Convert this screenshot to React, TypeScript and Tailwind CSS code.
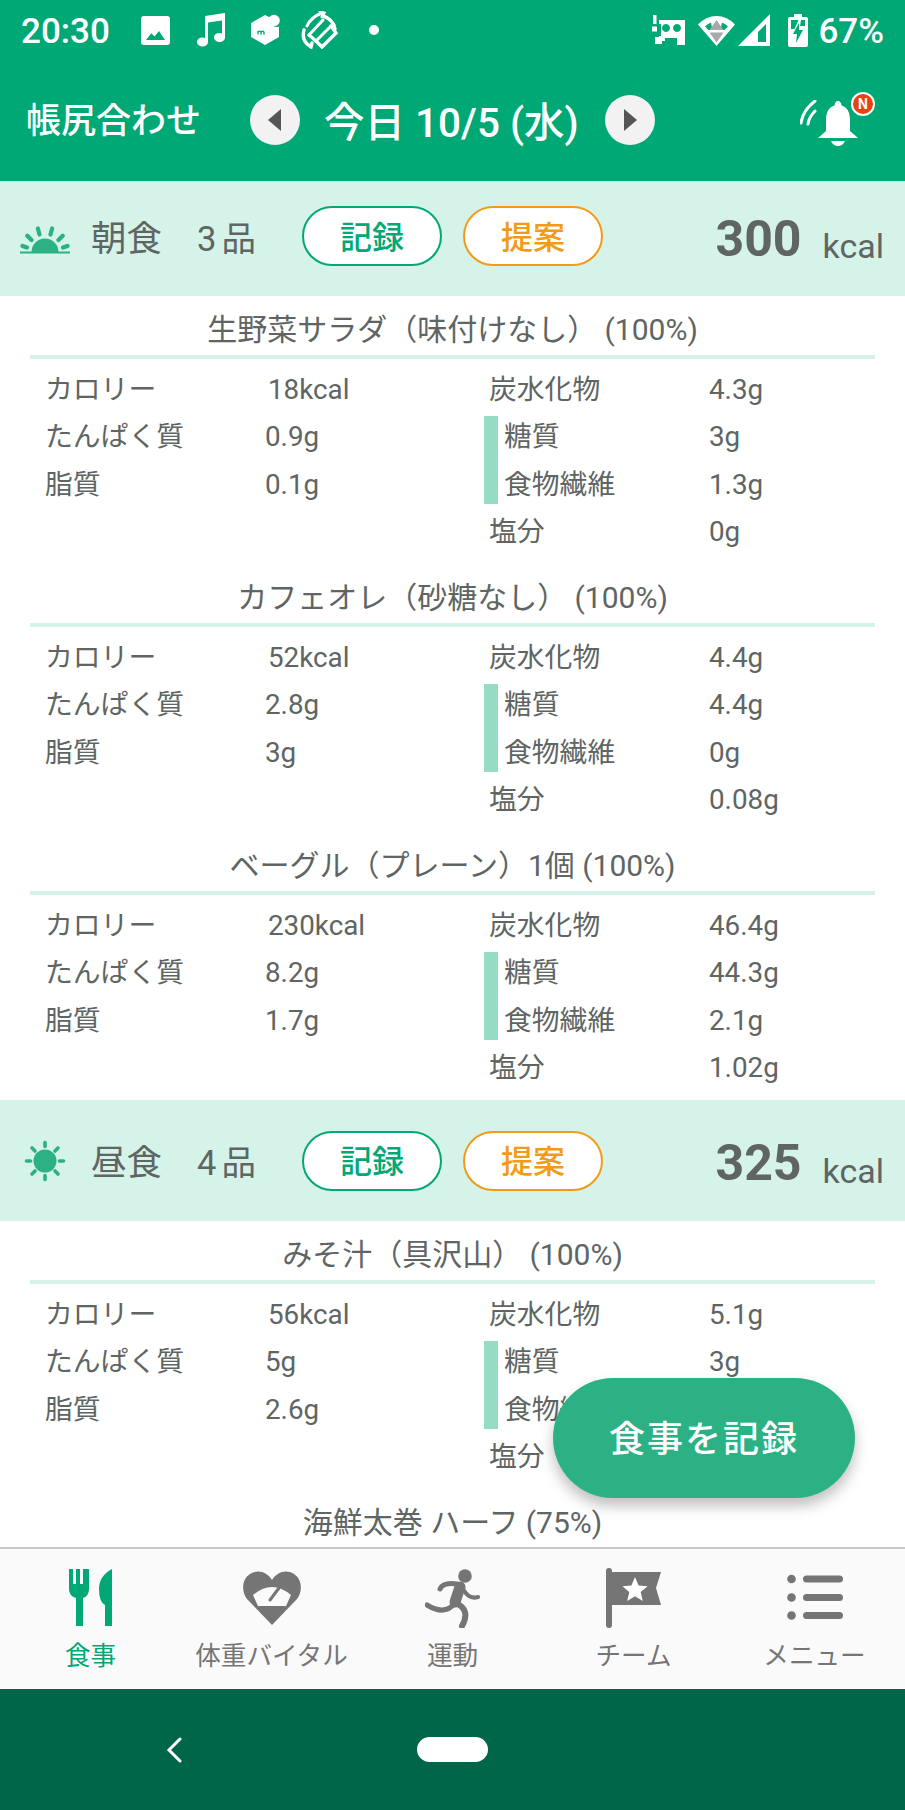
import React from "react";

type Food = { title: string; v?: string[] };

const breakfast: Food[] = [
  { title: "生野菜サラダ（味付けなし） (100%)", v: ["18kcal", "0.9g", "0.1g", "4.3g", "3g", "1.3g", "0g"] },
  { title: "カフェオレ（砂糖なし） (100%)", v: ["52kcal", "2.8g", "3g", "4.4g", "4.4g", "0g", "0.08g"] },
  { title: "ベーグル（プレーン）1個 (100%)", v: ["230kcal", "8.2g", "1.7g", "46.4g", "44.3g", "2.1g", "1.02g"] },
];
const lunch: Food[] = [
  { title: "みそ汁（具沢山） (100%)", v: ["56kcal", "5g", "2.6g", "5.1g", "3g", "", ""] },
  { title: "海鮮太巻 ハーフ (75%)" },
];

function Row({ label, value, kcal, sub }: { label: string; value: string; kcal?: boolean; sub?: boolean }) {
  return (
    <div className={sub ? "flex h-[39px] items-center" : "flex h-[47.6px] items-center"}>
      <span className={sub ? "w-[211px] pl-[6px]" : "w-[220px]"}>{label}</span>
      {value ? <span className={kcal ? "ml-[3px]" : ""}>{value}</span> : null}
    </div>
  );
}

function Item({ food }: { food: Food }) {
  const v = food.v;
  return (
    <div className="h-[268px] shrink-0">
      <div className="mx-[30px] flex h-[63px] items-center justify-center border-b-4 border-[#D5F3E8] pt-[9px] text-[30px] leading-[40px] text-[#5E6563]">
        {food.title}
      </div>
      {v ? (
        <div className="grid grid-cols-[444px_1fr] pl-[45px] pt-[7px] text-[27.800px] leading-[36px] text-[#5E6563]">
          <div>
            <Row label="カロリー" value={v[0]} kcal />
            <Row label="たんぱく質" value={v[1]} />
            <Row label="脂質" value={v[2]} />
          </div>
          <div>
            <Row label="炭水化物" value={v[3]} />
            <div className="ml-[-5px] mb-[4.5px] mt-[2.5px] flex h-[88px] flex-col justify-between border-l-[14px] border-[#94DCC4] pt-[1px]">
              <Row label="糖質" value={v[4]} sub />
              <Row label="食物繊維" value={v[5]} sub />
            </div>
            <Row label="塩分" value={v[6]} />
          </div>
        </div>
      ) : null}
    </div>
  );
}

function SunriseIcon() {
  return (
    <svg width="50" height="40" viewBox="0 0 50 40" fill="none">
      <path d="M11.5 36a13.5 13.5 0 0 1 27 0z" fill="#2BB184" />
      <path d="M0 36.5h50" stroke="#2BB184" strokeWidth="2" />
      <g stroke="#2BB184" strokeWidth="4.2" strokeLinecap="round">
        <path d="M19.5 18.5l-1.6-6M30.5 18.5l1.6-6M11.5 24l-4.2-4.2M38.5 24l4.2-4.2M7 31.5l-4.5-1.6M43 31.5l4.5-1.6" />
      </g>
    </svg>
  );
}

function SunIcon() {
  return (
    <svg width="50" height="42" viewBox="0 0 50 42" fill="none">
      <circle cx="25" cy="21" r="11.5" fill="#2BB184" />
      <g stroke="#2BB184" strokeWidth="3.6" strokeLinecap="round">
        <path d="M25 2.5v4M25 35.500v4M6.500 21h4M39.500 21h4M12 8l3 3M35 31l3 3M38 8l-3 3M15 31l-3 3" />
      </g>
    </svg>
  );
}

function MealHeader({ icon, name, count, kcal, first }: { icon: React.ReactNode; name: string; count: string; kcal: string; first?: boolean }) {
  return (
    <div className={first ? "mt-[-5px] flex h-[120px] shrink-0 items-center bg-[#D5F3E8] pl-[20px] text-[#5E6563]" : "flex h-[121px] shrink-0 items-center bg-[#D5F3E8] pl-[20px] text-[#5E6563]"}>
      <span className="flex w-[50px] justify-center">{icon}</span>
      <span className="ml-[21px] w-[106px] pt-[5px] text-[35.500px] leading-[46px]">{name}</span>
      <span className="w-[105px] pt-[5px] text-[34.500px] leading-[46px]">
        {count}
        <span className="ml-[5px]">品</span>
      </span>
      <button className="flex h-[60px] w-[140px] items-center justify-center rounded-full border-[2.500px] border-[#00A876] bg-white pt-[3px] text-[32px] font-medium leading-[44px] text-[#00A876]">
        記録
      </button>
      <button className="ml-[21px] flex h-[60px] w-[140px] items-center justify-center rounded-full border-[2.500px] border-[#F39A16] bg-white pt-[3px] text-[32px] font-medium leading-[44px] text-[#F39A16]">
        提案
      </button>
      <span className="ml-auto pt-[5px] text-[50px] font-bold leading-none">{kcal}</span>
      <span className="ml-[21px] mr-[21px] mt-[20px] text-[34px] leading-none">kcal</span>
    </div>
  );
}

function StatusLeft() {
  return (
    <div className="flex items-center">
      <span className="pt-[2px] text-[35px] font-medium leading-none text-white">20:30</span>
      <svg className="ml-[31px]" width="29" height="29" viewBox="0 0 29 29">
        <path fillRule="evenodd" fill="#fff" d="M3 0h23a3 3 0 0 1 3 3v23a3 3 0 0 1-3 3H3a3 3 0 0 1-3-3V3a3 3 0 0 1 3-3zM5 24h19l-6-9-4.500 5.500-3.200-3.200z" />
      </svg>
      <svg className="ml-[26px]" width="29" height="34" viewBox="0 0 29 34">
        <path fill="#fff" d="M9 3l20-3v24.500a5.500 4.500 0 1 1-3-4V7.500L12 9.600V29a5.500 4.500 0 1 1-3-4z" />
      </svg>
      <svg className="ml-[26px]" width="30" height="32" viewBox="0 0 30 32">
        <path fill="#fff" d="M14 1l5 2.500a7 7 0 0 0 9 9V23L14 31 0 23V9z" />
        <circle cx="23" cy="6.500" r="5.800" fill="#fff" />
        <path d="M7 20.500V17m0 1.200q2-2 3 0v2.500m0-2.500q2-2 3 0v2.500" stroke="#00A876" strokeWidth="1.300" fill="none" />
      </svg>
      <svg className="ml-[20px]" width="38" height="38" viewBox="0 0 38 38" fill="none" stroke="#fff" strokeLinecap="round">
        <path d="M8 24L22 9M15 30L30 15" strokeWidth="3" />
        <path d="M15 30l6 6 14-14-5-7" strokeWidth="3.400" />
        <path d="M8 24l7 6" strokeWidth="3.400" />
        <path d="M6 15Q10 6 21 2M19 1l4 1-2 4" strokeWidth="3" />
        <path d="M22 5Q32 8 34 18" strokeWidth="3.400" />
        <path d="M3 19Q0 30 9 35M6 33l4 3 1-4" strokeWidth="3.400" />
      </svg>
      <span className="ml-[30px] h-[10px] w-[10px] rounded-full bg-white" />
    </div>
  );
}

function StatusRight() {
  return (
    <div className="ml-auto flex items-center pr-[21px]">
      <svg width="33" height="30" viewBox="0 0 33 30">
        <path fill="#fff" d="M1 0h3.500v9H1zM0 11.500h5v5H0z" />
        <path fill="#fff" fillRule="evenodd" d="M7 5h26v25H25v-7H13v3H7v-5h2V9H7zM14 9a4 4 0 1 0 .01 0zM25 9a4 4 0 1 0 .01 0z" />
        <path fill="#fff" d="M3 22h7v7H3z" />
      </svg>
      <svg className="ml-[13px]" width="37" height="31" viewBox="0 0 37 31">
        <path fill="#fff" d="M18.500 31L0 9.500Q8 1 18.500 1T37 9.500z" />
        <path fill="#00A876" d="M7 11.500Q9.500 9 13 7.500l1.500 7.500h-4zM30 11.500Q27.500 9 24 7.500L22.500 15h4z" />
        <path fill="#A8A8A8" d="M18.500 5l7 10H11.500zM11.500 17.500h14l-7 10z" />
      </svg>
      <svg className="ml-[3px]" width="32" height="32" viewBox="0 0 32 32">
        <path fill="#fff" d="M32 0v32H0zM28 10L20 18v10h8z" fillRule="evenodd" />
      </svg>
      <svg className="ml-[18px]" width="20" height="33" viewBox="0 0 20 33">
        <path fill="#fff" fillRule="evenodd" d="M6 0h8v3h4a2 2 0 0 1 2 2v26a2 2 0 0 1-2 2H2a2 2 0 0 1-2-2V5a2 2 0 0 1 2-2h4zM3 6v9h3.500l4-9zM17 6h-4l-1 6h5zM11 9L5 20h4l-1 9 7-13h-4z" />
      </svg>
      <span className="ml-[10px] pt-[2px] text-[35px] font-medium leading-none text-white">67%</span>
    </div>
  );
}

function NavButton({ dir }: { dir: "l" | "r" }) {
  return (
    <button className="flex h-[50px] w-[50px] items-center justify-center rounded-full bg-[#F2F2F2]">
      <svg width="14" height="22" viewBox="0 0 14 22">
        <path fill="#555" d={dir === "l" ? "M13 0v22L0 11z" : "M1 0v22l13-11z"} />
      </svg>
    </button>
  );
}

function Bell() {
  return (
    <div className="relative ml-auto mr-[30px] h-[60px] w-[75px]">
      <svg className="absolute left-0 top-[10px]" width="60" height="50" viewBox="0 0 60 50" fill="none">
        <path fill="#fff" d="M38 1q3 0 3.500 4.500C47 7 50 12 50 20v11l8 7H18l8-7V20c0-8 3-13 8.500-14.500Q35 1 38 1z" />
        <path fill="#fff" d="M31 41h14q-2 5-7 5t-7-5z" />
        <path stroke="#fff" strokeWidth="3" strokeLinecap="round" d="M1 23Q3 10 15 1M8 24q1-7 7-13" />
      </svg>
      <span className="absolute right-0 top-[2px] flex h-[24px] w-[24px] items-center justify-center rounded-full border-2 border-white bg-[#E8420E] text-[14px] font-bold leading-none text-white">
        N
      </span>
    </div>
  );
}

const gray = "#757575";

function Tab({ icon, label, active }: { icon: React.ReactNode; label: string; active?: boolean }) {
  return (
    <div className="flex flex-col items-center">
      <div className="flex h-[62px] items-center justify-center">{icon}</div>
      <span className={active ? "mt-[9px] text-[25.600px] leading-[36px] text-[#00A876]" : "mt-[9px] text-[25.600px] leading-[36px] text-[#757575]"}>{label}</span>
    </div>
  );
}

function ForkKnife() {
  return (
    <svg width="44" height="58" viewBox="0 0 44 58">
      <path fill="#00A876" d="M0 0h4v15h3V0h4v15h3V0h6v20q0 7-6 9v28H7V29q-7-2-7-9z" />
      <path fill="#00A876" d="M43 0v57h-7V36Q30 33 30 20T43 0z" />
    </svg>
  );
}

function HeartGauge() {
  return (
    <svg width="58" height="54" viewBox="0 0 58 54">
      <path fill={gray} d="M29 54L4 28C-2 20-1 8 7 3c8-5 17-2 22 6 5-8 14-11 22-6 8 5 9 17 3 25z" />
      <path fill="#FAFAFA" d="M10 24Q29 8 48 24l-5 11H15z" />
      <path stroke={gray} strokeWidth="3" strokeLinecap="round" d="M27 29l9-12" />
    </svg>
  );
}

function Runner() {
  return (
    <svg width="55" height="60" viewBox="0 0 55 60" fill="none" stroke={gray} strokeLinecap="round" strokeLinejoin="round">
      <circle cx="40" cy="8" r="6.800" fill={gray} stroke="none" />
      <path d="M35 19L30 34" strokeWidth="11" />
      <path d="M32 16Q18 14 15 21" strokeWidth="5" />
      <path d="M38 21Q44 32 53 29" strokeWidth="4" />
      <path d="M30 35Q20 48 2 37" strokeWidth="5" />
      <path d="M31 35Q46 42 37 58" strokeWidth="6" />
    </svg>
  );
}

function Flag() {
  return (
    <svg width="55" height="60" viewBox="0 0 55 60">
      <path fill={gray} d="M3 0a3 3 0 0 1 3 3v1h49l-5 16 5 17H6v20a3 3 0 0 1-6 0V3a3 3 0 0 1 3-3z" />
      <path fill="#fff" d="M29 9l3.600 8.500 9 .7-6.900 5.900 2.100 8.900-7.800-4.800-7.800 4.800 2.100-8.900-6.900-5.900 9-.7z" />
    </svg>
  );
}

function MenuIcon() {
  return (
    <svg className="mb-[3px]" width="56" height="46" viewBox="0 0 56 46">
      <g fill={gray}>
        <circle cx="4.500" cy="5" r="4.300" />
        <circle cx="4.500" cy="23.500" r="4.300" />
        <circle cx="4.500" cy="41.500" r="4.300" />
        <rect x="16" y="1.500" width="40" height="7" rx="3.500" />
        <rect x="16" y="20" width="40" height="7" rx="3.500" />
        <rect x="16" y="38" width="40" height="7" rx="3.500" />
      </g>
    </svg>
  );
}

export default function App() {
  return (
    <div className="relative flex h-[1810px] w-[905px] flex-col overflow-hidden bg-white font-['Roboto','Noto_Sans_CJK_JP',sans-serif]">
      <div className="h-[181px] shrink-0 bg-[#00A876]">
        <div className="flex h-[60px] items-center pl-[21px]">
          <StatusLeft />
          <StatusRight />
        </div>
        <div className="flex h-[121px] items-center pb-[1px] text-white">
          <span className="ml-[26px] w-[224px] pt-[4px] text-[35px] font-medium leading-[48px]">帳尻合わせ</span>
          <NavButton dir="l" />
          <span className="w-[305px] whitespace-nowrap pl-[24px] pt-[5px] text-[40.500px] font-medium leading-[50px]">今日 10/5 (水)</span>
          <NavButton dir="r" />
          <Bell />
        </div>
      </div>

      <div className="flex min-h-0 flex-1 flex-col overflow-hidden">
        <MealHeader first icon={<SunriseIcon />} name="朝食" count="3" kcal="300" />
        {breakfast.map((f) => (
          <Item key={f.title} food={f} />
        ))}
        <MealHeader icon={<SunIcon />} name="昼食" count="4" kcal="325" />
        {lunch.map((f) => (
          <Item key={f.title} food={f} />
        ))}
      </div>

      <div className="grid h-[142px] shrink-0 grid-cols-5 border-t-[2px] border-[#C8C8C8] bg-[#FAFAFA] pt-[18px]">
        <Tab active icon={<ForkKnife />} label="食事" />
        <Tab icon={<HeartGauge />} label="体重バイタル" />
        <Tab icon={<Runner />} label="運動" />
        <Tab icon={<Flag />} label="チーム" />
        <Tab icon={<MenuIcon />} label="メニュー" />
      </div>

      <div className="relative flex h-[121px] shrink-0 items-center justify-center bg-[#00664A]">
        <svg className="absolute left-[166px] top-[48px]" width="17" height="26" viewBox="0 0 17 26" fill="none">
          <path d="M14 2L3 13l11 11" stroke="#fff" strokeWidth="3" strokeLinecap="round" />
        </svg>
        <span className="h-[25px] w-[71px] rounded-full bg-white" />
      </div>

      <button className="absolute bottom-[312px] right-[50px] flex h-[120px] w-[302px] items-center justify-center rounded-full bg-[#2BB184] pt-[3px] text-[36px] font-medium leading-[50px] tracking-[2px] text-white shadow-[0_8px_14px_rgba(0,0,0,0.25)]">
        食事を記録
      </button>
    </div>
  );
}
